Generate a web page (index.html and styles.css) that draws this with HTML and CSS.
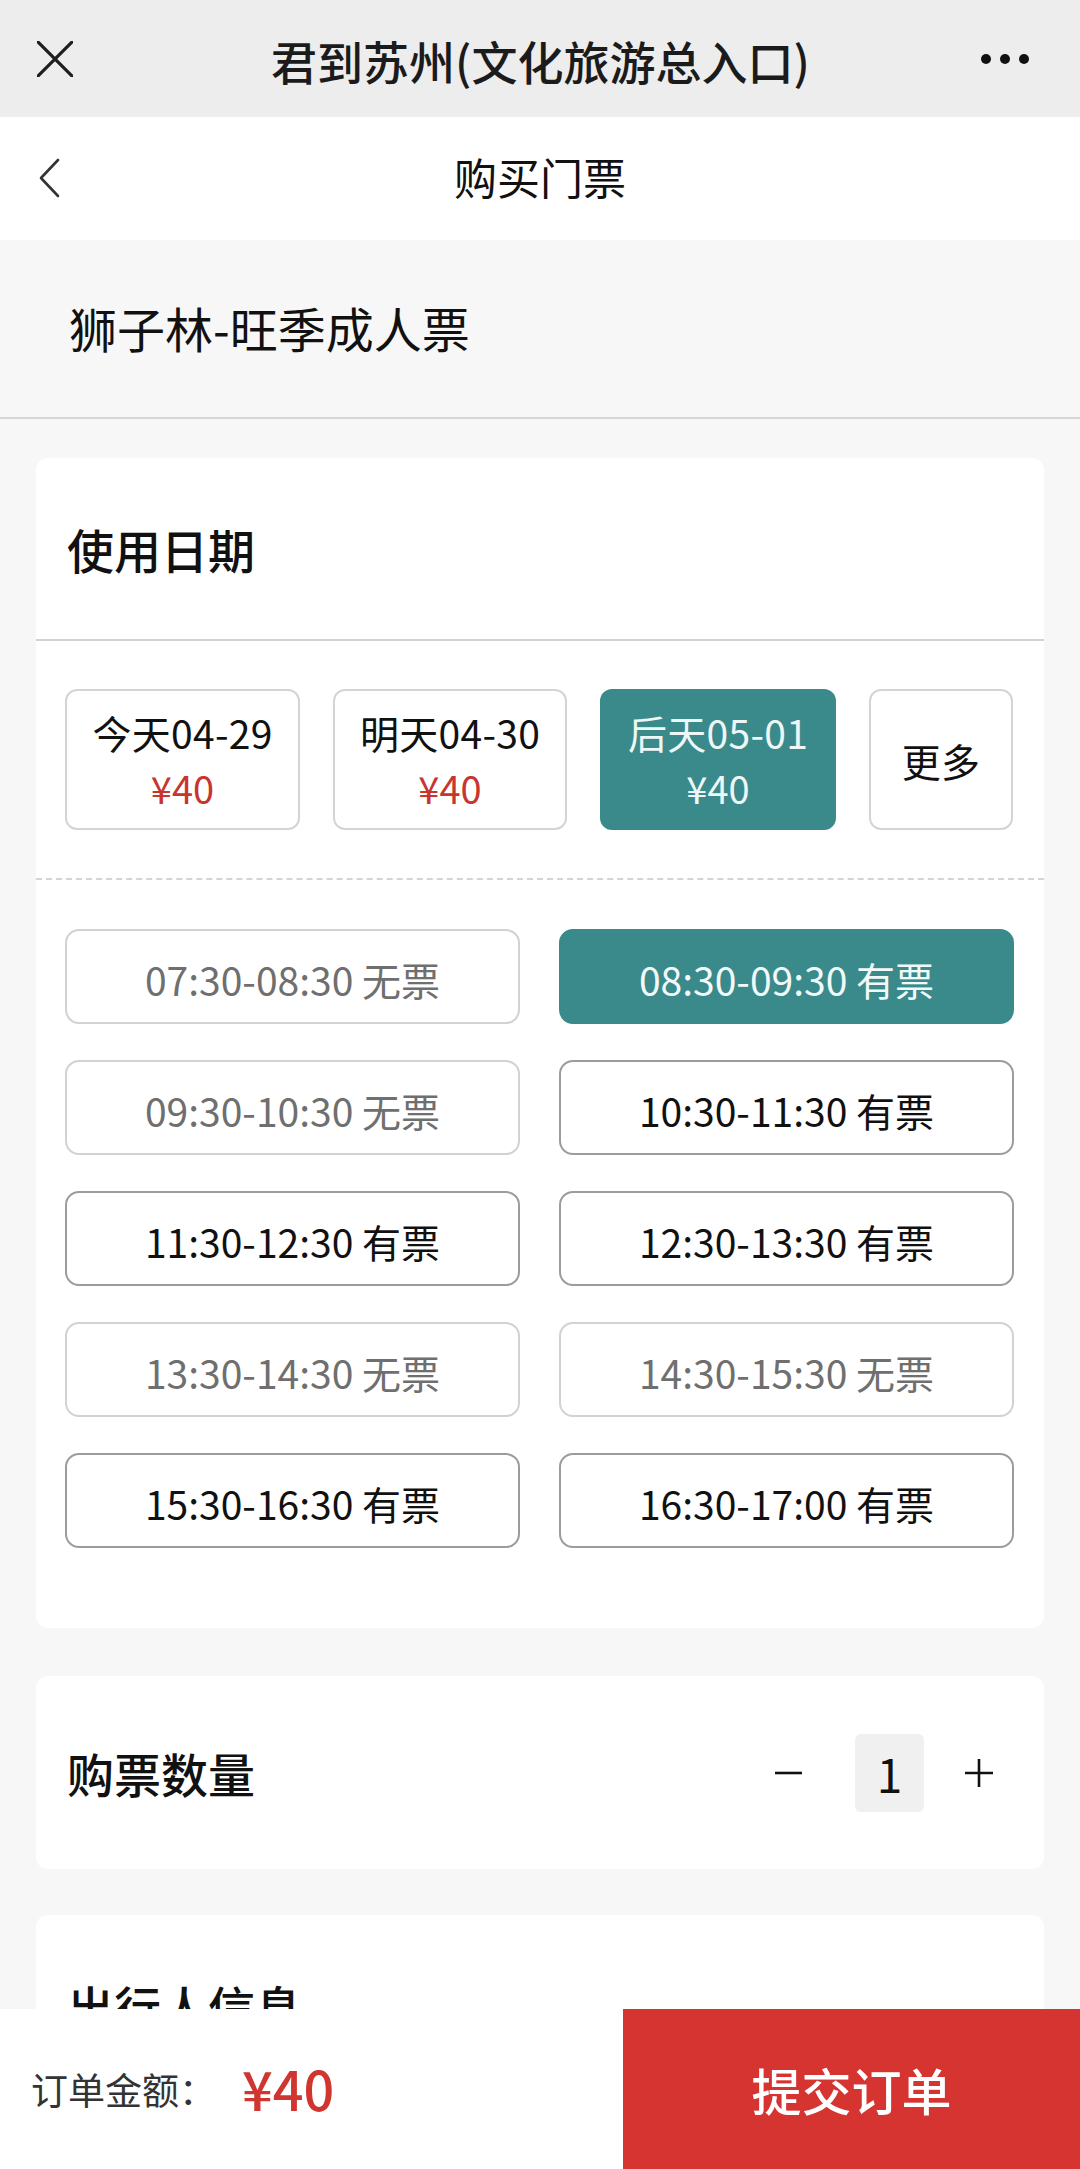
FILE: index.html
```html
<!DOCTYPE html>
<html lang="zh-CN">
<head>
<meta charset="utf-8">
<title>购买门票</title>
<link rel="stylesheet" href="styles.css">
</head>
<body>
<div class="page">
  <header class="wx-bar">
    <svg class="wx-close" width="36" height="36" viewBox="0 0 36 36"><path d="M1 1 L35 35 M35 1 L1 35" stroke="#1e1e1e" stroke-width="3.2" fill="none" stroke-linecap="round"/></svg>
    <div class="wx-title">君到苏州(文化旅游总入口)</div>
    <svg class="wx-more" width="50" height="12" viewBox="0 0 50 12"><circle cx="6" cy="6" r="5" fill="#111"/><circle cx="25" cy="6" r="5" fill="#111"/><circle cx="44" cy="6" r="5" fill="#111"/></svg>
  </header>

  <nav class="nav">
    <svg class="nav-back" width="22" height="40" viewBox="0 0 22 40"><path d="M19 2 L2 20 L19 38" stroke="#333" stroke-width="2.6" fill="none" stroke-linecap="round" stroke-linejoin="round"/></svg>
    <div class="nav-title">购买门票</div>
  </nav>

  <section class="product">
    <h1 class="product-name">狮子林-旺季成人票</h1>
  </section>

  <section class="card">
    <div class="card-head">使用日期</div>
    <div class="dates">
      <div class="date date-w1"><div class="date-day">今天04-29</div><div class="date-price">¥40</div></div>
      <div class="date date-w2"><div class="date-day">明天04-30</div><div class="date-price">¥40</div></div>
      <div class="date date-w3 is-active"><div class="date-day">后天05-01</div><div class="date-price">¥40</div></div>
      <div class="date date-more"><div class="date-day">更多</div></div>
    </div>
    <div class="slots">
      <div class="slot is-off">07:30-08:30 无票</div>
      <div class="slot is-active">08:30-09:30 有票</div>
      <div class="slot is-off">09:30-10:30 无票</div>
      <div class="slot">10:30-11:30 有票</div>
      <div class="slot">11:30-12:30 有票</div>
      <div class="slot">12:30-13:30 有票</div>
      <div class="slot is-off">13:30-14:30 无票</div>
      <div class="slot is-off">14:30-15:30 无票</div>
      <div class="slot">15:30-16:30 有票</div>
      <div class="slot">16:30-17:00 有票</div>
    </div>
  </section>

  <section class="card card-qty">
    <div class="qty-label">购票数量</div>
    <div class="stepper">
      <svg class="step-btn step-minus" width="28" height="28" viewBox="0 0 28 28"><path d="M0 14 H27" stroke="#111" stroke-width="2.6"/></svg>
      <div class="step-val">1</div>
      <svg class="step-btn" width="28" height="28" viewBox="0 0 28 28"><path d="M0 14 H28 M14 0 V28" stroke="#111" stroke-width="2.6"/></svg>
    </div>
  </section>

  <section class="card card-traveler">
    <div class="card-head card-head-plain">出行人信息</div>
  </section>

  <footer class="bottom-bar">
    <div class="total">
      <span class="total-label">订单金额：</span><span class="total-price">¥40</span>
    </div>
    <button class="submit">提交订单</button>
  </footer>
</div>
</body>
</html>
```

FILE: styles.css
```css
html, body {
  margin: 0;
  padding: 0;
}
body {
  background: #f7f7f7;
  font-family: "Noto Sans CJK SC", "Noto Sans", sans-serif;
  color: #111;
}
.page {
  width: 1080px;
  height: 2169px;
  overflow: hidden;
  position: relative;
  background: #f7f7f7;
}

/* WeChat bar */
.wx-bar {
  height: 117px;
  background: #ededed;
  display: flex;
  align-items: center;
  padding: 0 50px 0 37px;
  box-sizing: border-box;
}
.wx-close {
  flex: none;
  margin-top: 1px;
}
.wx-title {
  flex: 1;
  text-align: center;
  font-size: 46px;
  font-weight: 500;
  color: #1b1b1b;
  margin-left: 28px;
  margin-top: 2px;
}
.wx-more {
  flex: none;
  margin-top: 1px;
}

/* nav */
.nav {
  height: 123px;
  background: #fff;
  display: flex;
  align-items: center;
  padding-left: 39px;
  box-sizing: border-box;
}
.nav-back {
  flex: none;
  margin-top: -2px;
}
.nav-title {
  flex: 1;
  text-align: center;
  font-size: 43px;
  color: #111;
  margin-left: -61px;
  margin-top: -6px;
}

/* product */
.product {
  height: 177px;
  display: flex;
  align-items: center;
  padding-left: 69px;
  border-bottom: 2px solid #d6d6d6;
}
.product-name {
  margin: 0;
  font-size: 48px;
  font-weight: 400;
  color: #111;
  margin-top: -4px;
}

/* cards */
.card {
  margin: 39px 36px 0;
  background: #fff;
  border-radius: 12px;
}
.card-head {
  height: 181px;
  display: flex;
  align-items: center;
  padding-left: 31px;
  font-size: 47px;
  font-weight: 500;
  border-bottom: 2px solid #d2d2d2;
}
.card-head-plain {
  border-bottom: none;
}

.dates {
  display: flex;
  gap: 33px;
  padding: 48px 29px 48px;
  border-bottom: 2px dashed #d4d4d4;
}
.date {
  height: 141px;
  box-sizing: border-box;
  border: 2px solid #d4d4d4;
  border-radius: 12px;
  display: flex;
  flex-direction: column;
  align-items: center;
  justify-content: center;
}
.date-w1 { width: 235px; }
.date-w2 { width: 234px; }
.date-w3 { width: 236px; }
.date-more { width: 144px; }
.date-day {
  font-size: 39px;
  line-height: 56px;
  color: #111;
  letter-spacing: 0.3px;
}
.date-price {
  font-size: 38px;
  line-height: 56px;
  color: #c8352f;
}
.date.is-active {
  background: #3a8a8b;
  border-color: #3a8a8b;
}
.date.is-active .date-day,
.date.is-active .date-price {
  color: #eef7f7;
}

.slots {
  display: grid;
  grid-template-columns: 455px 455px;
  column-gap: 39px;
  row-gap: 36px;
  padding: 49px 29px 80px;
}
.slot {
  height: 95px;
  box-sizing: border-box;
  border: 2px solid #9c9c9c;
  border-radius: 14px;
  display: flex;
  align-items: center;
  justify-content: center;
  padding-top: 5px;
  font-size: 39px;
  color: #111;
}
.slot.is-off {
  border-color: #d2d2d2;
  color: #6f6f6f;
}
.slot.is-active {
  background: #3a8a8b;
  border-color: #3a8a8b;
  color: #f2f9f9;
}

/* quantity */
.card-qty {
  margin-top: 48px;
  height: 193px;
  display: flex;
  align-items: center;
  justify-content: space-between;
  padding: 0 51px 0 31px;
}
.qty-label {
  font-size: 47px;
  font-weight: 500;
}
.stepper {
  display: flex;
  align-items: center;
  gap: 41px;
}
.step-minus {
  margin-right: 11px;
}
.step-val {
  width: 69px;
  height: 78px;
  background: #f0f0f0;
  border-radius: 6px;
  display: flex;
  align-items: center;
  justify-content: center;
  font-size: 46px;
  color: #111;
}

.card-traveler {
  margin-top: 46px;
  height: 600px;
}
.card-traveler .card-head {
  height: 181px;
}

/* bottom bar */
.bottom-bar {
  position: absolute;
  left: 0;
  bottom: 0;
  width: 1080px;
  height: 160px;
  display: flex;
  background: #fff;
}
.total {
  flex: 1;
  display: flex;
  align-items: center;
  padding-left: 31px;
}
.total-label {
  font-size: 37px;
  color: #333;
}
.total-price {
  font-size: 54px;
  font-weight: 500;
  color: #d0352f;
  margin-left: 26px;
  margin-top: -4px;
}
.submit {
  width: 457px;
  height: 160px;
  border: none;
  margin: 0;
  padding: 0;
  background: #d63431;
  color: #fff;
  font-family: "Noto Sans CJK SC", sans-serif;
  font-size: 50px;
  font-weight: 500;
}
```
